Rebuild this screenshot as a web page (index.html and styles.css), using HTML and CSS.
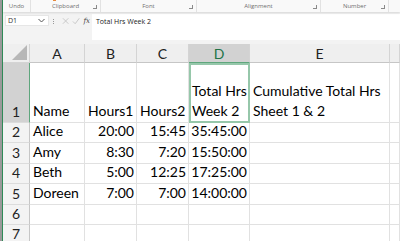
FILE: index.html
```html
<!DOCTYPE html>
<html lang="en">
  <head>
    <meta charset="UTF-8" />
    <title>Book1 - Excel</title>
    <link rel="stylesheet" href="styles.css">
  </head>
  <body>
    <div class="edge"></div>
    <div class="app">
      <div class="ribbon">
        <div class="group g-undo"><span class="label">Undo</span></div>
        <div class="group g-clip">
          <span class="painter"></span>
          <span class="label">Clipboard</span>
          <span class="launch"></span>
        </div>
        <div class="group g-font"><span class="label">Font</span><span class="launch"></span></div>
        <div class="group g-align"><span class="label">Alignment</span><span class="launch"></span></div>
        <div class="group g-num"><span class="label">Number</span><span class="launch"></span></div>
      </div>

      <div class="formula-area">
        <div class="namebox">
          <span>D1</span>
          <svg class="chev" width="7" height="5" viewBox="0 0 7 5"><path d="M0.5 1 L3.5 4 L6.5 1" fill="none" stroke="#555" stroke-width="1"/></svg>
        </div>
        <div class="dots"></div>
        <div class="fx-tools">
          <svg width="8" height="8" viewBox="0 0 8 8"><path d="M1 1 L7 7 M7 1 L1 7" stroke="#c4c4c4" stroke-width="1"/></svg>
          <svg width="9" height="8" viewBox="0 0 9 8"><path d="M1 4.5 L3.5 7 L8 1" fill="none" stroke="#c4c4c4" stroke-width="1"/></svg>
          <span class="fx">fx</span>
        </div>
        <div class="formula">Total Hrs Week 2</div>
      </div>

      <div class="sheet">
        <div class="corner"><span class="tri"></span></div>
        <div class="col">A</div>
        <div class="col">B</div>
        <div class="col">C</div>
        <div class="col sel">D</div>
        <div class="col">E</div>
        <div class="col"></div>

        <div class="rowh sel">1</div>
        <div class="cell">Name</div>
        <div class="cell">Hours1</div>
        <div class="cell">Hours2</div>
        <div class="cell active">Total Hrs<br>Week 2</div>
        <div class="cell">Cumulative Total Hrs<br>Sheet 1 &amp; 2</div>
        <div class="cell"></div>

        <div class="rowh">2</div>
        <div class="cell">Alice</div>
        <div class="cell num">20:00</div>
        <div class="cell num">15:45</div>
        <div class="cell num">35:45:00</div>
        <div class="cell"></div>
        <div class="cell"></div>

        <div class="rowh">3</div>
        <div class="cell">Amy</div>
        <div class="cell num">8:30</div>
        <div class="cell num">7:20</div>
        <div class="cell num">15:50:00</div>
        <div class="cell"></div>
        <div class="cell"></div>

        <div class="rowh">4</div>
        <div class="cell">Beth</div>
        <div class="cell num">5:00</div>
        <div class="cell num">12:25</div>
        <div class="cell num">17:25:00</div>
        <div class="cell"></div>
        <div class="cell"></div>

        <div class="rowh">5</div>
        <div class="cell">Doreen</div>
        <div class="cell num">7:00</div>
        <div class="cell num">7:00</div>
        <div class="cell num">14:00:00</div>
        <div class="cell"></div>
        <div class="cell"></div>

        <div class="rowh">6</div>
        <div class="cell"></div>
        <div class="cell"></div>
        <div class="cell"></div>
        <div class="cell"></div>
        <div class="cell"></div>
        <div class="cell"></div>

        <div class="rowh">7</div>
        <div class="cell"></div>
        <div class="cell"></div>
        <div class="cell"></div>
        <div class="cell"></div>
        <div class="cell"></div>
        <div class="cell"></div>
      </div>
    </div>
  </body>
</html>
```

FILE: styles.css
```css
body {
  margin: 0;
  width: 400px;
  height: 241px;
  overflow: hidden;
  display: flex;
  font-family: Lato, "Liberation Sans", sans-serif;
  background: #f3f3f3;
}
.edge {
  width: 2px;
  flex: none;
  background: #9a9a9a;
  border-right: 1px solid #2f8a57;
}
.app {
  flex: 1;
  display: flex;
  flex-direction: column;
  min-width: 0;
}

/* ribbon bottom strip */
.ribbon {
  height: 12px;
  display: flex;
  background: #f9f9f9;
  box-shadow: 0 1px 2px rgba(0, 0, 0, 0.12);
  position: relative;
}
.group {
  position: relative;
  display: flex;
  justify-content: center;
  align-items: center;
  border-right: 1px solid #e2e2e2;
  box-sizing: border-box;
  height: 12px;
}
.g-undo { width: 28px; }
.g-clip { width: 70px; }
.g-font { width: 96px; }
.g-align { width: 124px; }
.g-num { width: 68px; }
.label {
  font-family: "Open Sans", sans-serif;
  font-size: 6px;
  color: #707070;
}
.launch {
  position: absolute;
  right: 3px;
  top: 5px;
  width: 3px;
  height: 3px;
  border: 1px solid #8a8a8a;
  border-top: none;
  border-left: none;
}
.painter {
  position: absolute;
  left: 22px;
  top: 0;
  width: 3px;
  height: 1px;
  background: #e8883a;
}

/* formula bar */
.formula-area {
  display: flex;
  align-items: flex-start;
  height: 29px;
  padding-top: 2px;
  padding-left: 2px;
  box-sizing: border-box;
}
.namebox {
  width: 44px;
  height: 11px;
  margin-top: 1px;
  background: #fff;
  border: 1px solid #e6e6e6;
  box-sizing: border-box;
  display: flex;
  align-items: center;
  justify-content: space-between;
  padding: 0 3px 0 2px;
  font-family: "Open Sans", sans-serif;
  font-size: 7px;
  color: #333;
}
.chev {
  display: block;
}
.dots {
  width: 1px;
  height: 5px;
  margin: 5px 4px 0;
  border-left: 1px dotted #999;
}
.fx-tools {
  width: 31px;
  height: 11px;
  margin-top: 1px;
  display: flex;
  align-items: center;
  gap: 3px;
  padding-left: 3px;
  box-sizing: border-box;
}
.fx {
  font-family: "DejaVu Serif", serif;
  font-style: italic;
  font-size: 7px;
  color: #444;
}
.formula {
  flex: 1;
  height: 26px;
  margin-left: 2px;
  background: #fff;
  font-family: "Open Sans", sans-serif;
  font-size: 7px;
  color: #222;
  padding: 3px 4px;
  box-sizing: border-box;
}

/* grid */
.sheet {
  margin-top: 4px;
  display: grid;
  grid-template-columns: 27px 55px 52px 52px 61px 140px 1fr;
  grid-template-rows: 19px 60px repeat(6, 20.4px);
  background: #fff;
  font-size: 14px;
  color: #000;
}
.corner {
  background: #efefef;
  border-right: 1px solid #d4d4d4;
  border-bottom: 1px solid #d4d4d4;
  position: relative;
}
.tri {
  position: absolute;
  right: 2px;
  bottom: 2px;
  width: 0;
  height: 0;
  border-left: 15px solid transparent;
  border-bottom: 15px solid #b7b7b7;
}
.col {
  background: #efefef;
  border-right: 1px solid #d4d4d4;
  border-bottom: 1px solid #c6c6c6;
  display: flex;
  align-items: center;
  justify-content: center;
  color: #222;
}
.col.sel {
  background: #d2d2d2;
  color: #217346;
  border-bottom: 1px solid #5fa67d;
}
.rowh {
  background: #f3f3f3;
  border-right: 1px solid #c6c6c6;
  border-bottom: 1px solid #dcdcdc;
  display: flex;
  align-items: flex-end;
  justify-content: center;
  padding-bottom: 2px;
  color: #222;
}
.rowh.sel {
  background: #d2d2d2;
  border-right: 1px solid #5fa67d;
}
.cell {
  border-right: 1px solid #e1e1e1;
  border-bottom: 1px solid #e1e1e1;
  display: flex;
  flex-direction: column;
  justify-content: flex-end;
  padding: 0 2px 1px 3px;
  line-height: 20px;
  white-space: nowrap;
}
.cell.num {
  align-items: flex-end;
}
.cell.active {
  border: 2px solid #96c7aa;
  padding: 0 1px 0 1px;
}
```
